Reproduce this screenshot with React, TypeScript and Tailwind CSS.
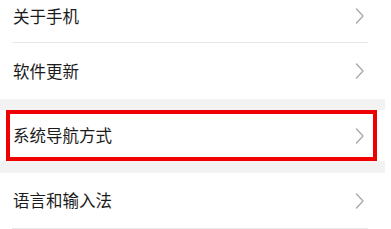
import React from "react";

function Chevron() {
  return (
    <svg width="10" height="16" viewBox="0 0 10 16" fill="none" className="shrink-0">
      <path d="M1.5 1l6.5 7-6.5 7" stroke="#ababab" strokeWidth="1.4" strokeLinecap="round" strokeLinejoin="round" />
    </svg>
  );
}

function Row({ label, className }: { label: string; className: string }) {
  return (
    <div className={`flex items-center justify-between bg-white pl-[13px] pr-[20px] ${className}`}>
      <span className="text-[16.5px] leading-none text-[#1b1b1b]">{label}</span>
      <Chevron />
    </div>
  );
}

export default function App() {
  return (
    <div className="w-[391px] h-[229px] overflow-hidden bg-white font-['Noto_Sans_CJK_SC','Noto_Sans',sans-serif]">
      <div className="w-[385px] -mt-[10px]">
        <Row label="关于手机" className="h-[52px]" />
        <div className="h-px ml-[12px] w-[356px] bg-[#e8e8e8]" />
        <Row label="软件更新" className="h-[56px]" />
        <div className="h-[11px] bg-[#f2f2f2]" />
        <div className="relative">
          <Row label="系统导航方式" className="h-[51px]" />
          <div className="absolute left-[6px] top-0 w-[371px] h-[51px] border-[4px] border-[#f00000]" />
        </div>
        <div className="h-[12px] bg-[#f2f2f2]" />
        <Row label="语言和输入法" className="h-[55px]" />
        <div className="h-px ml-[12px] w-[356px] bg-[#e8e8e8]" />
      </div>
    </div>
  );
}
